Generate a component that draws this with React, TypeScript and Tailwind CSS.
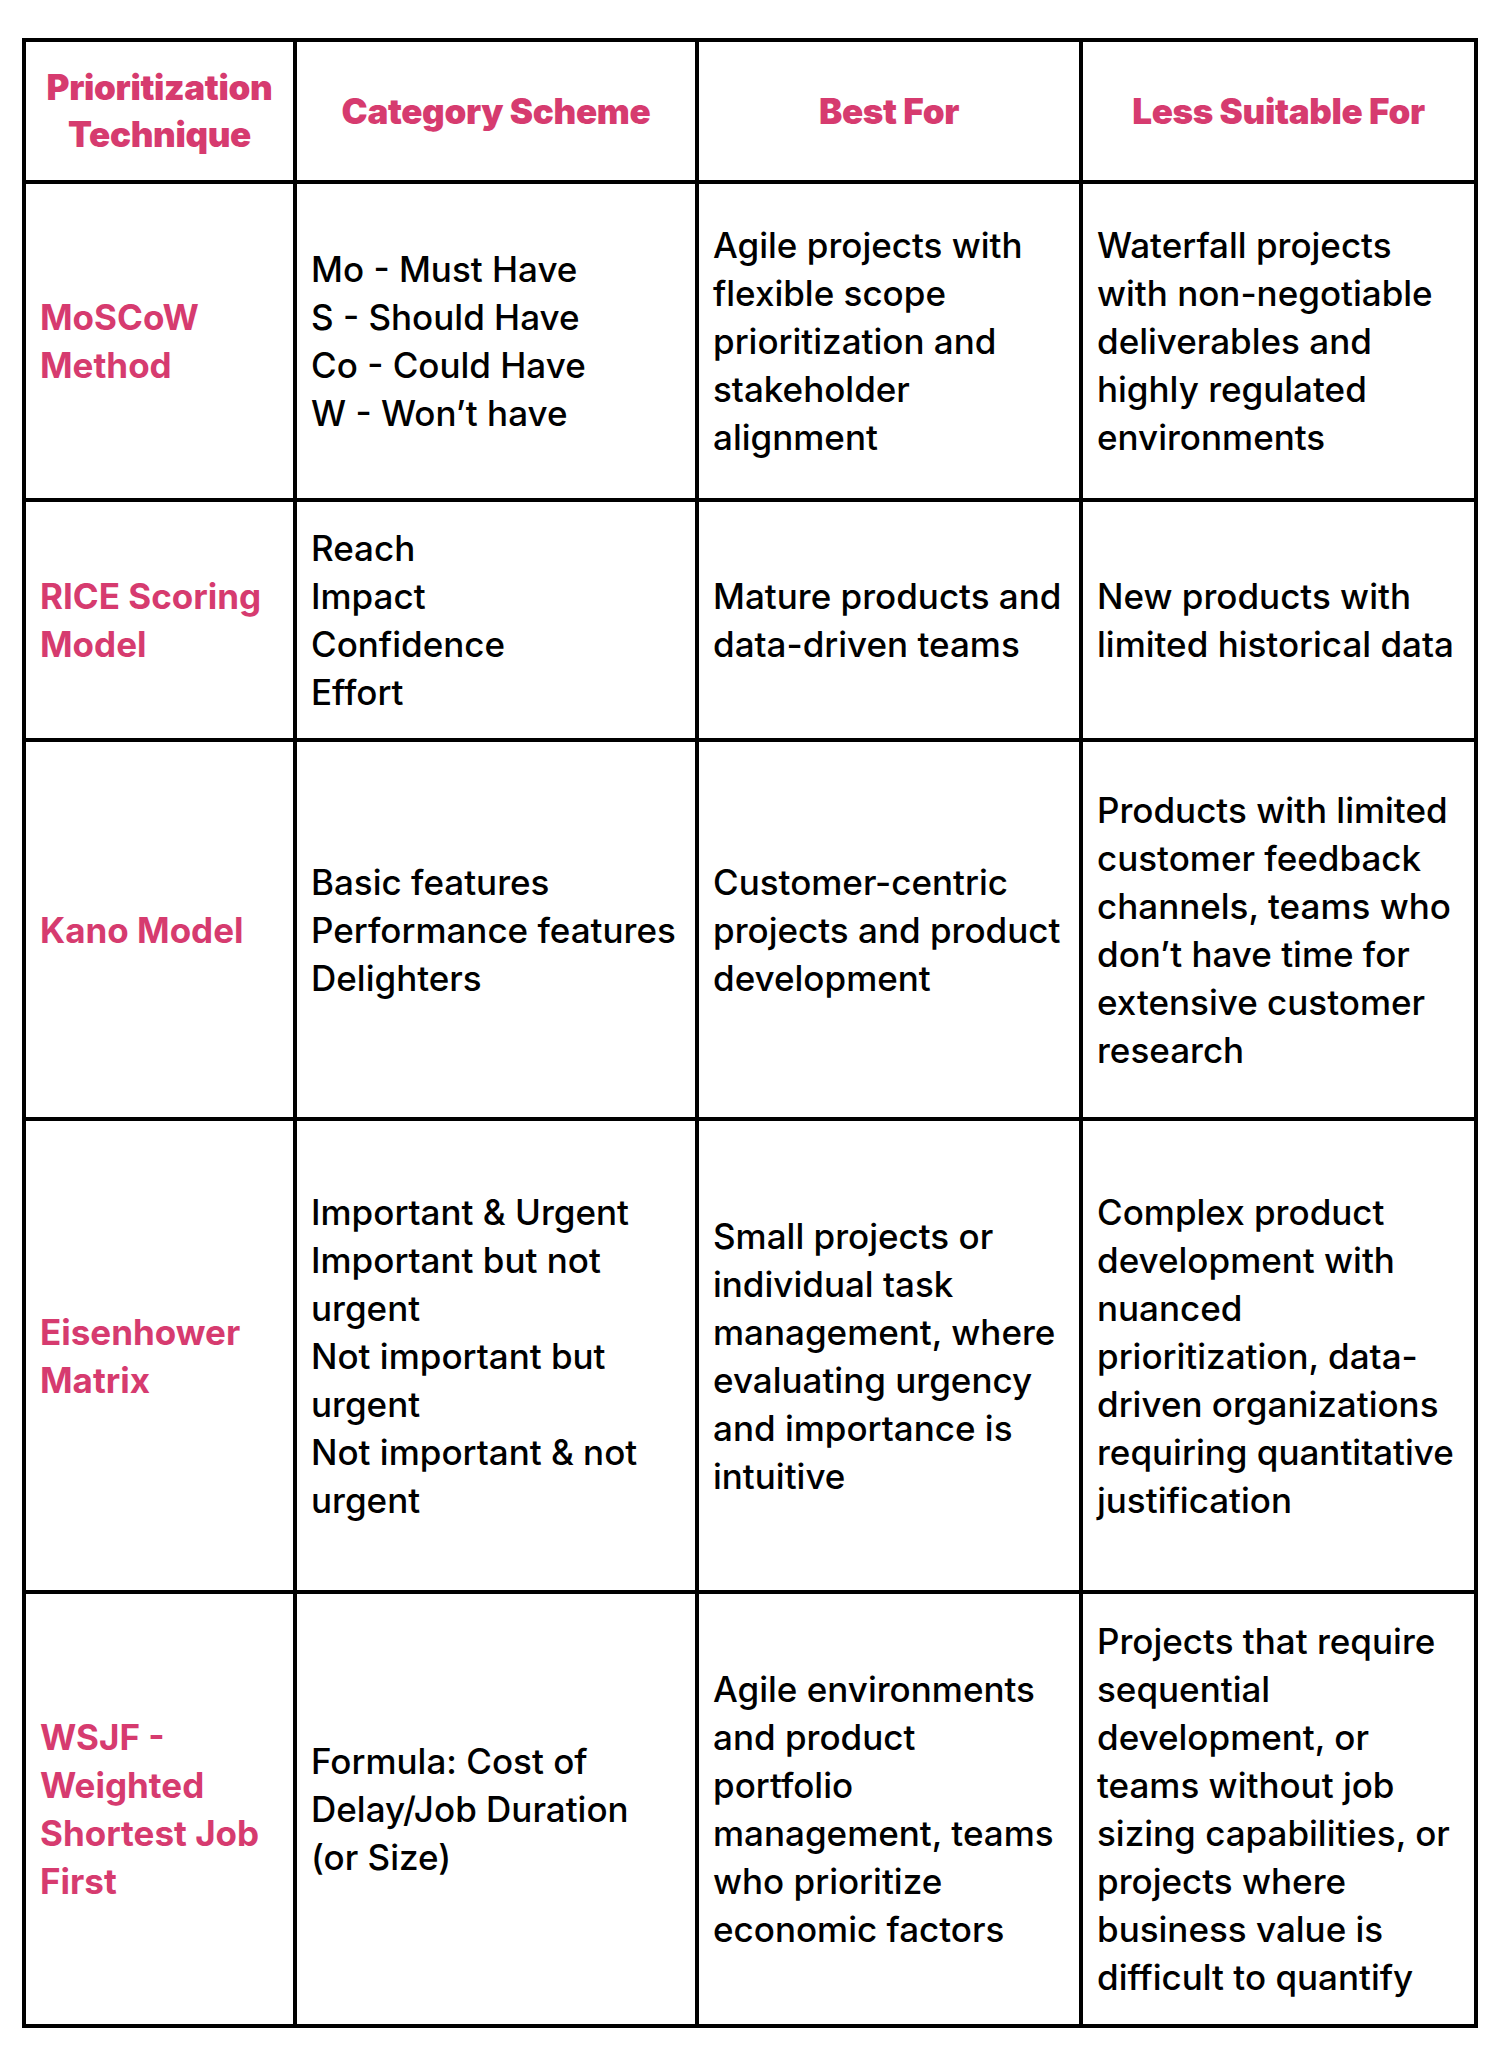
const pink = "text-[#d63b6f]";

type Row = {
  name: string[];
  scheme: string[];
  best: string[];
  less: string[];
  height: string;
};

const rows: Row[] = [
  {
    name: ["MoSCoW", "Method"],
    scheme: ["Mo - Must Have", "S - Should Have", "Co - Could Have", "W - Won’t have"],
    best: ["Agile projects with", "flexible scope", "prioritization and", "stakeholder", "alignment"],
    less: ["Waterfall projects", "with non-negotiable", "deliverables and", "highly regulated", "environments"],
    height: "h-[314px]",
  },
  {
    name: ["RICE Scoring", "Model"],
    scheme: ["Reach", "Impact", "Confidence", "Effort"],
    best: ["Mature products and", "data-driven teams"],
    less: ["New products with", "limited historical data"],
    height: "h-[236px]",
  },
  {
    name: ["Kano Model"],
    scheme: ["Basic features", "Performance features", "Delighters"],
    best: ["Customer-centric", "projects and product", "development"],
    less: [
      "Products with limited",
      "customer feedback",
      "channels, teams who",
      "don’t have time for",
      "extensive customer",
      "research",
    ],
    height: "h-[375px]",
  },
  {
    name: ["Eisenhower", "Matrix"],
    scheme: [
      "Important & Urgent",
      "Important but not",
      "urgent",
      "Not important but",
      "urgent",
      "Not important & not",
      "urgent",
    ],
    best: [
      "Small projects or",
      "individual task",
      "management, where",
      "evaluating urgency",
      "and importance is",
      "intuitive",
    ],
    less: [
      "Complex product",
      "development with",
      "nuanced",
      "prioritization, data-",
      "driven organizations",
      "requiring quantitative",
      "justification",
    ],
    height: "h-[469px]",
  },
  {
    name: ["WSJF -", "Weighted", "Shortest Job", "First"],
    scheme: ["Formula: Cost of", "Delay/Job Duration", "(or Size)"],
    best: [
      "Agile environments",
      "and product",
      "portfolio",
      "management, teams",
      "who prioritize",
      "economic factors",
    ],
    less: [
      "Projects that require",
      "sequential",
      "development, or",
      "teams without job",
      "sizing capabilities, or",
      "projects where",
      "business value is",
      "difficult to quantify",
    ],
    height: "h-[430px]",
  },
];

const headers = [["Prioritization", "Technique"], ["Category Scheme"], ["Best For"], ["Less Suitable For"]];

function Lines({ lines }: { lines: string[] }) {
  return (
    <>
      {lines.map((l, i) => (
        <div key={i} className="whitespace-nowrap">
          {l}
        </div>
      ))}
    </>
  );
}

function Cell({ lines, className }: { lines: string[]; className?: string }) {
  return (
    <div className={`bg-white flex flex-col justify-center pl-[14px] overflow-hidden ${className ?? ""}`}>
      <Lines lines={lines} />
    </div>
  );
}

export default function App() {
  return (
    <div className="min-h-screen bg-white pt-[38px] pl-[22px] font-['Inter','Liberation_Sans',sans-serif] text-[35px] leading-[48px] text-black">
      <div className="inline-grid grid-cols-[267px_398px_380px_391px] gap-[4px] p-[4px] bg-black">
        {headers.map((h, i) => (
          <div
            key={i}
            className={`h-[138px] bg-white flex flex-col items-center justify-center text-center font-black tracking-[-0.01em] leading-[47px] ${pink}`}
          >
            <Lines lines={h} />
          </div>
        ))}
        {rows.map((r, i) => (
          <div key={i} className="contents">
            <Cell lines={r.name} className={`${r.height} font-bold ${pink}`} />
            <Cell lines={r.scheme} className={`${r.height} font-medium`} />
            <Cell lines={r.best} className={`${r.height} font-medium`} />
            <Cell lines={r.less} className={`${r.height} font-medium`} />
          </div>
        ))}
      </div>
    </div>
  );
}
